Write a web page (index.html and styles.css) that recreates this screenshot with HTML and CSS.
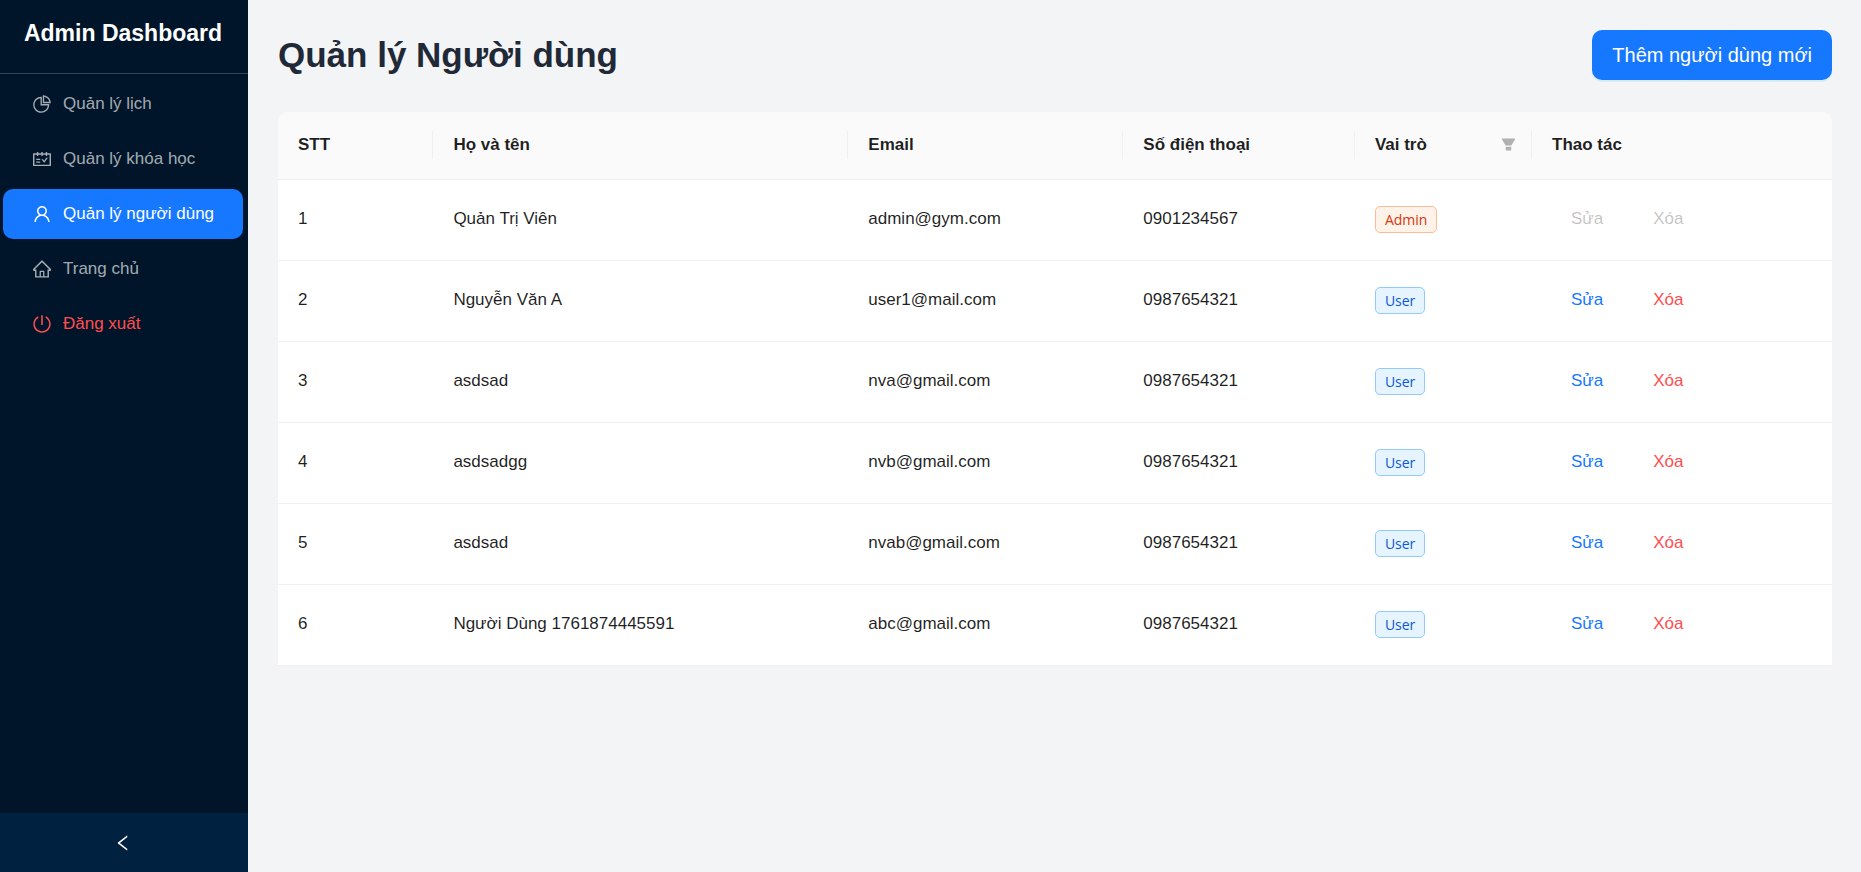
FILE: index.html
```html
<!DOCTYPE html>
<html lang="vi">
<head>
<meta charset="utf-8">
<meta name="viewport" content="width=device-width, initial-scale=1">
<title>Quản lý Người dùng</title>
<link rel="stylesheet" href="styles.css">
</head>
<body>
<div class="layout">
  <aside class="sidebar">
    <div class="brand">Admin Dashboard</div>
    <nav class="menu">
      <a class="menu-item" href="#lich">
        <svg class="icon" viewBox="64 64 896 896" aria-hidden="true"><path d="M864 518H506V160c0-4.400-3.600-8-8-8h-26a398.460 398.460 0 00-282.800 117.100 398.190 398.190 0 00-85.700 127.100A397.610 397.610 0 0072 552a398.460 398.460 0 00117.100 282.800c36.700 36.700 79.500 65.600 127.100 85.700A397.610 397.610 0 00472 952a398.460 398.460 0 00282.800-117.100c36.700-36.700 65.600-79.500 85.700-127.100A397.610 397.610 0 00872 552v-26c0-4.400-3.600-8-8-8zM705.700 787.800A331.590 331.590 0 01470.400 884c-88.100-.4-170.900-34.900-233.200-97.200C174.500 724.100 140 640.700 140 552c0-88.700 34.500-172.100 97.200-234.800 54.600-54.600 124.900-87.900 200.800-95.500V586h364.300c-7.700 76.300-41.300 147-96.600 201.800zM952 462.400l-2.600-28.200c-8.500-92.100-49.400-179-115.200-244.600A399.400 399.400 0 00589 74.600L560.700 72c-4.700-.4-8.700 3.200-8.700 7.900V464c0 4.400 3.600 8 8 8l384-1c4.700 0 8.400-4 8-8.600zm-332.200-58.200V147.600a332.240 332.240 0 01166.400 89.800c45.700 45.600 77 103.600 90 166.100l-256.400.7z"/></svg>
        <span>Quản lý lịch</span>
      </a>
      <a class="menu-item" href="#khoa-hoc">
        <svg class="icon" viewBox="64 64 896 896" aria-hidden="true"><path d="M928 224H768v-56c0-4.400-3.600-8-8-8h-56c-4.400 0-8 3.600-8 8v56H548v-56c0-4.400-3.600-8-8-8h-56c-4.400 0-8 3.600-8 8v56H328v-56c0-4.400-3.600-8-8-8h-56c-4.400 0-8 3.600-8 8v56H96c-17.700 0-32 14.300-32 32v576c0 17.700 14.300 32 32 32h832c17.700 0 32-14.300 32-32V256c0-17.700-14.300-32-32-32zm-40 568H136V296h120v56c0 4.400 3.600 8 8 8h56c4.400 0 8-3.600 8-8v-56h148v56c0 4.400 3.600 8 8 8h56c4.400 0 8-3.600 8-8v-56h148v56c0 4.400 3.600 8 8 8h56c4.400 0 8-3.600 8-8v-56h120v496zM416 496H232c-4.400 0-8 3.600-8 8v48c0 4.400 3.600 8 8 8h184c4.400 0 8-3.600 8-8v-48c0-4.400-3.600-8-8-8zm0 136H232c-4.400 0-8 3.600-8 8v48c0 4.400 3.600 8 8 8h184c4.400 0 8-3.600 8-8v-48c0-4.400-3.600-8-8-8zm308.200-177.400L620.600 598.300l-52.800-73.100c-3-4.200-7.800-6.600-12.900-6.600H500c-6.500 0-10.300 7.400-6.500 12.700l114.100 158.200a15.900 15.900 0 0025.800 0l165-228.700c3.800-5.300 0-12.700-6.500-12.700H737c-5-.1-9.800 2.400-12.800 6.500z"/></svg>
        <span>Quản lý khóa học</span>
      </a>
      <a class="menu-item is-active" href="#nguoi-dung" aria-current="page">
        <svg class="icon" viewBox="64 64 896 896" aria-hidden="true"><path d="M858.500 763.600a374 374 0 00-80.600-119.500 375.630 375.630 0 00-119.500-80.600c-.4-.2-.8-.3-1.200-.5C719.500 518 760 444.700 760 362c0-137-111-248-248-248S264 225 264 362c0 82.700 40.500 156 102.800 201.100-.4.2-.8.3-1.200.5-44.800 18.900-85 46-119.500 80.600a375.630 375.630 0 00-80.600 119.500A371.700 371.700 0 00136 901.800a8 8 0 008 8.200h60c4.400 0 7.900-3.500 8-7.800 2-77.200 33-149.500 87.800-204.300 56.700-56.700 132-87.900 212.200-87.900s155.500 31.200 212.200 87.900C779 752.700 810 825 812 902.200c.1 4.400 3.600 7.800 8 7.800h60a8 8 0 008-8.200c-1-47.800-10.900-94.300-29.500-138.200zM512 534c-45.900 0-89.100-17.900-121.600-50.400S340 407.900 340 362c0-45.900 17.900-89.100 50.400-121.600S466.100 190 512 190s89.100 17.900 121.600 50.400S684 316.100 684 362c0 45.900-17.900 89.100-50.400 121.600S557.900 534 512 534z"/></svg>
        <span>Quản lý người dùng</span>
      </a>
      <a class="menu-item" href="#trang-chu">
        <svg class="icon" viewBox="64 64 896 896" aria-hidden="true"><path d="M946.500 505L560.100 118.800l-25.900-25.900a31.500 31.500 0 00-44.400 0L77.500 505a63.900 63.900 0 00-18.800 46c.4 35.200 29.700 63.300 64.900 63.300h42.500V940h691.800V614.300h43.400c17.100 0 33.200-6.700 45.300-18.800a63.600 63.600 0 0018.700-45.300c0-17-6.700-33.100-18.800-45.200zM568 868H456V664h112v204zm217.900-325.700V868H632V640c0-22.100-17.900-40-40-40H432c-22.100 0-40 17.900-40 40v228H238.100V542.300h-96l370-369.700 23.100 23.100L882 542.300h-96.100z"/></svg>
        <span>Trang chủ</span>
      </a>
      <a class="menu-item is-danger" href="#dang-xuat">
        <svg class="icon" viewBox="64 64 896 896" aria-hidden="true"><path d="M705.600 124.900a8 8 0 00-11.600 7.200v64.200c0 5.500 2.900 10.600 7.500 13.600a352.200 352.200 0 0162.200 49.800c32.700 32.800 58.400 70.900 76.300 113.300a355 355 0 0127.900 138.700c0 48.100-9.400 94.800-27.900 138.700a355.920 355.920 0 01-76.300 113.300 353.060 353.060 0 01-113.200 76.400c-43.800 18.600-90.500 28-138.500 28s-94.700-9.400-138.500-28a353.060 353.060 0 01-113.200-76.400A355.920 355.920 0 01184 650.400a355 355 0 01-27.900-138.700c0-48.100 9.400-94.800 27.900-138.700 17.900-42.400 43.600-80.500 76.300-113.300 19-19 39.800-35.600 62.200-49.800 4.700-2.900 7.500-8.100 7.500-13.600V132c0-6-6.300-9.800-11.600-7.200C178.500 195.200 82 339.300 80 506.300 77.200 745.100 272.500 943.500 511.200 944c239 .5 432.800-193.300 432.800-432.400 0-169.200-97-315.700-238.400-386.700zM480 560h64c4.400 0 8-3.600 8-8V88c0-4.400-3.600-8-8-8h-64c-4.400 0-8 3.600-8 8v464c0 4.400 3.600 8 8 8z"/></svg>
        <span>Đăng xuất</span>
      </a>
    </nav>
    <button class="collapse" type="button" aria-label="Thu gọn">
      <svg class="icon" viewBox="64 64 896 896" aria-hidden="true"><path d="M724 218.300V141c0-6.700-7.700-10.400-12.900-6.300L260.300 486.800a31.860 31.860 0 000 50.300l450.800 352.100c5.300 4.100 12.900.4 12.900-6.300v-77.300c0-4.900-2.300-9.600-6.100-12.600l-360-281 360-281.100c3.800-3 6.100-7.700 6.100-12.600z"/></svg>
    </button>
  </aside>

  <main class="content">
    <header class="page-header">
      <h1 class="page-title">Quản lý Người dùng</h1>
      <button class="btn-primary" type="button">Thêm người dùng mới</button>
    </header>

    <table class="users">
      <colgroup>
        <col class="col-index"><col class="col-name"><col class="col-email"><col class="col-phone"><col class="col-role"><col>
      </colgroup>
      <thead>
        <tr>
          <th scope="col"><div class="head">STT</div></th>
          <th scope="col"><div class="head">Họ và tên</div></th>
          <th scope="col"><div class="head">Email</div></th>
          <th scope="col"><div class="head">Số điện thoại</div></th>
          <th scope="col"><div class="head">Vai trò
            <button class="filter" type="button" aria-label="Lọc vai trò"><svg viewBox="64 64 896 896" aria-hidden="true"><path d="M349 838c0 17.700 14.200 32 31.800 32h262.400c17.600 0 31.800-14.300 31.800-32V642H349v196zm531.100-684H143.900c-24.500 0-39.800 26.700-27.500 48l221.300 376h348.800l221.300-376c12.100-21.300-3.200-48-27.700-48z"/></svg></button></div></th>
          <th scope="col"><div class="head">Thao tác</div></th>
        </tr>
      </thead>
      <tbody>
        <tr><td>1</td><td>Quản Trị Viên</td><td>admin@gym.com</td><td>0901234567</td><td><span class="tag tag-admin">Admin</span></td><td><div class="actions"><button class="link" type="button" disabled>Sửa</button><button class="link link-danger" type="button" disabled>Xóa</button></div></td></tr>
        <tr><td>2</td><td>Nguyễn Văn A</td><td>user1@mail.com</td><td>0987654321</td><td><span class="tag">User</span></td><td><div class="actions"><button class="link" type="button">Sửa</button><button class="link link-danger" type="button">Xóa</button></div></td></tr>
        <tr><td>3</td><td>asdsad</td><td>nva@gmail.com</td><td>0987654321</td><td><span class="tag">User</span></td><td><div class="actions"><button class="link" type="button">Sửa</button><button class="link link-danger" type="button">Xóa</button></div></td></tr>
        <tr><td>4</td><td>asdsadgg</td><td>nvb@gmail.com</td><td>0987654321</td><td><span class="tag">User</span></td><td><div class="actions"><button class="link" type="button">Sửa</button><button class="link link-danger" type="button">Xóa</button></div></td></tr>
        <tr><td>5</td><td>asdsad</td><td>nvab@gmail.com</td><td>0987654321</td><td><span class="tag">User</span></td><td><div class="actions"><button class="link" type="button">Sửa</button><button class="link link-danger" type="button">Xóa</button></div></td></tr>
        <tr><td>6</td><td>Người Dùng 1761874445591</td><td>abc@gmail.com</td><td>0987654321</td><td><span class="tag">User</span></td><td><div class="actions"><button class="link" type="button">Sửa</button><button class="link link-danger" type="button">Xóa</button></div></td></tr>
      </tbody>
    </table>
  </main>
</div>
</body>
</html>
```
FILE: styles.css
```css
*, *::before, *::after { box-sizing: border-box; }

body {
  margin: 0;
  font-family: "Liberation Sans", Arial, sans-serif;
  font-size: 17px;
  line-height: 28px;
  color: rgba(0, 0, 0, 0.88);
  background: #f3f4f6;
}

button {
  font: inherit;
  border: 0;
  margin: 0;
  padding: 0;
  background: none;
  cursor: pointer;
}

svg { display: block; fill: currentColor; }

.layout { display: flex; min-height: 100vh; }

/* Sidebar */
.sidebar {
  flex: none;
  width: 248px;
  display: flex;
  flex-direction: column;
  background: #001529;
}

.brand {
  padding: 19px 2px 26px 0;
  border-bottom: 1px solid #334454;
  color: #fff;
  font-size: 23px;
  font-weight: 700;
  text-align: center;
  white-space: nowrap;
}

.menu {
  flex: 1;
  display: flex;
  flex-direction: column;
  gap: 5px;
  padding: 5px 5px 5px 3px;
}

.menu-item {
  display: flex;
  align-items: center;
  gap: 12px;
  height: 50px;
  padding: 0 20px 0 30px;
  border-radius: 10px;
  color: rgba(255, 255, 255, 0.65);
  text-decoration: none;
  white-space: nowrap;
}

.menu-item.is-active { background: #1677ff; color: #fff; }
.menu-item.is-danger { color: #ff4d4f; }

.icon { flex: none; width: 18px; height: 18px; }

.collapse {
  display: flex;
  align-items: center;
  justify-content: center;
  height: 59px;
  padding-right: 3px;
  background: #002140;
  color: #fff;
}

/* Content */
.content { flex: 1; min-width: 0; padding: 30px 29px 30px 30px; }

.page-header {
  display: flex;
  align-items: center;
  justify-content: space-between;
  margin-bottom: 32px;
}

.page-title {
  margin: 0;
  font-size: 35px;
  line-height: 50px;
  font-weight: 700;
  color: #1f2937;
}

.btn-primary {
  height: 50px;
  padding: 0 20px;
  border-radius: 10px;
  background: #1677ff;
  box-shadow: 0 2px 0 rgba(5, 145, 255, 0.1);
  color: #fff;
  font-size: 20px;
}

/* Users table */
.users {
  width: 100%;
  table-layout: fixed;
  border-collapse: separate;
  border-spacing: 0;
  background: #fff;
  border-radius: 10px 10px 0 0;
}

.col-index { width: 10%; }
.col-name { width: 26.7%; }
.col-email { width: 17.7%; }
.col-phone { width: 14.9%; }
.col-role { width: 11.4%; }

.users th,
.users td {
  padding: 0 0 2px 20px;
  border-bottom: 1px solid #f0f0f0;
  text-align: left;
}

.users th { height: 68px; background: #fafafa; font-weight: 700; }
.users td { height: 81px; }
.users th:first-child { border-top-left-radius: 10px; }
.users th:last-child { border-top-right-radius: 10px; }

.head {
  display: flex;
  align-items: center;
  justify-content: space-between;
  padding-right: 15px;
  border-right: 1px solid #f0f0f0;
}

.users th:last-child .head { border-right: 0; }

.filter { color: rgba(0, 0, 0, 0.29); }
.filter svg { width: 15px; height: 15px; }

.tag {
  display: inline-block;
  padding: 0 9px;
  border: 1px solid #91caff;
  border-radius: 5px;
  background: #e6f4ff;
  color: #0958d9;
  font-family: "Open Sans", "Noto Sans", sans-serif;
  font-size: 14px;
  line-height: 25px;
  vertical-align: middle;
}

.tag-admin { border-color: #ffbb96; background: #fff2e8; color: #d4380d; }

.actions { display: flex; gap: 12px; }

.link { height: 40px; padding: 0 19px; color: #1677ff; }
.link-danger { color: #ff4d4f; }
.link:disabled { color: rgba(0, 0, 0, 0.25); cursor: not-allowed; }
```
